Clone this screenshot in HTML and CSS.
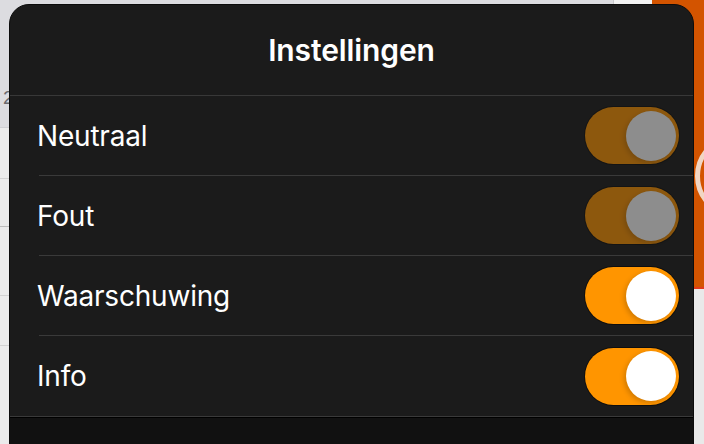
FILE: index.html
```html
<!DOCTYPE html>
<html lang="nl">
<head>
<meta charset="utf-8">
<title>Instellingen</title>
<link rel="stylesheet" href="styles.css">
</head>
<body>
<div class="backdrop">
  <div class="left">
    <div class="left-head">
      <div class="tab"></div>
      <div class="digit">2</div>
    </div>
    <div class="left-body">
      <div class="lrow r1"></div>
      <div class="lrow r2"></div>
      <div class="lrow r3"></div>
      <div class="lrow r4"></div>
    </div>
  </div>
  <div class="right">
    <div class="orange"><div class="ring"></div></div>
    <div class="right-body"></div>
  </div>
</div>

<div class="sheet">
  <div class="sheet-head">Instellingen</div>
  <div class="list">
    <div class="row">
      <div class="row-inner">
        <span class="label">Neutraal</span>
        <span class="toggle on disabled"><span class="knob"></span></span>
      </div>
    </div>
    <div class="row">
      <div class="row-inner">
        <span class="label">Fout</span>
        <span class="toggle on disabled"><span class="knob"></span></span>
      </div>
    </div>
    <div class="row">
      <div class="row-inner">
        <span class="label">Waarschuwing</span>
        <span class="toggle on"><span class="knob"></span></span>
      </div>
    </div>
    <div class="row last">
      <div class="row-inner">
        <span class="label">Info</span>
        <span class="toggle on"><span class="knob"></span></span>
      </div>
    </div>
  </div>
  <div class="sheet-foot"></div>
</div>
</body>
</html>
```

FILE: styles.css
```css
html, body {
  margin: 0;
  padding: 0;
}
body {
  width: 704px;
  height: 444px;
  overflow: hidden;
  position: relative;
  font-family: Inter, "Noto Sans", sans-serif;
  background: #ebebeb;
}

/* backdrop */
.backdrop {
  display: flex;
  height: 444px;
}
.left {
  flex: 1;
  display: flex;
  flex-direction: column;
}
.left-head {
  height: 127px;
  background: #dcdce0;
  display: flex;
  flex-direction: column;
  border-bottom: 1px solid #cfcfd3;
}
.tab {
  align-self: flex-end;
  width: 38px;
  height: 4px;
  background: #f2f2f2;
  border-left: 1px solid #c9c9cc;
}
.digit {
  margin-top: 84px;
  padding-left: 3px;
  font-family: "Liberation Sans", sans-serif;
  font-size: 19px;
  line-height: 20px;
  color: #6a6a6e;
}
.left-body {
  flex: 1;
  background: #ebebeb;
}
.lrow {
  border-bottom: 1px solid #d2d2d2;
}
.r1 { height: 50px; }
.r2 { height: 47px; border-bottom-color: #bdbdbd; }
.r3 { height: 68px; }
.r4 { height: 49px; }

.right {
  width: 52px;
  display: flex;
  flex-direction: column;
}
.orange {
  height: 287px;
  background: #d35400;
  border-bottom: 2px solid #e23a1c;
  overflow: hidden;
  display: flex;
  align-items: flex-start;
}
.ring {
  flex: none;
  width: 74px;
  height: 74px;
  border: 5px solid #f1d6c4;
  border-radius: 50%;
  margin-left: 43px;
  margin-top: 134px;
}
.right-body {
  flex: 1;
  background: #e9e9e9;
  border-left: 1px solid #d6d6d6;
}

/* sheet */
.sheet {
  position: absolute;
  left: 9px;
  top: 4px;
  width: 685px;
  height: 460px;
  box-sizing: border-box;
  background: #1b1b1b;
  border: 1px solid #0c0c0c;
  border-radius: 20px 20px 0 0;
  overflow: hidden;
  display: flex;
  flex-direction: column;
  color: #fff;
}
.sheet-head {
  height: 90px;
  flex: none;
  display: flex;
  align-items: center;
  justify-content: center;
  font-size: 30px;
  font-weight: 600;
  letter-spacing: -0.1px;
  border-bottom: 1px solid #383838;
}
.list {
  flex: none;
  border-bottom: 1px solid #3a3a3a;
}
.row {
  height: 80px;
  padding-left: 29px;
  box-sizing: border-box;
}
.row-inner {
  height: 100%;
  box-sizing: border-box;
  display: flex;
  align-items: center;
  justify-content: space-between;
  padding-right: 14px;
  border-bottom: 1px solid #3a3a3a;
}
.row.last .row-inner {
  border-bottom: none;
}
.label {
  margin-left: -2px;
  font-size: 28px;
  font-weight: 400;
  letter-spacing: -0.2px;
}

.toggle {
  width: 94px;
  height: 57px;
  border-radius: 29px;
  background: #ff9500;
  box-shadow: 0 0 0 1px rgba(0, 0, 0, 0.45);
  display: flex;
  align-items: center;
  justify-content: flex-end;
  padding-right: 3px;
  box-sizing: border-box;
}
.toggle.disabled {
  opacity: 0.5;
}
.knob {
  width: 50px;
  height: 50px;
  border-radius: 50%;
  background: #fff;
  box-shadow: -2px 2px 5px rgba(0, 0, 0, 0.18);
}

.sheet-foot {
  flex: 1;
  background: #111;
  border-top: 1px solid #000;
}
```
